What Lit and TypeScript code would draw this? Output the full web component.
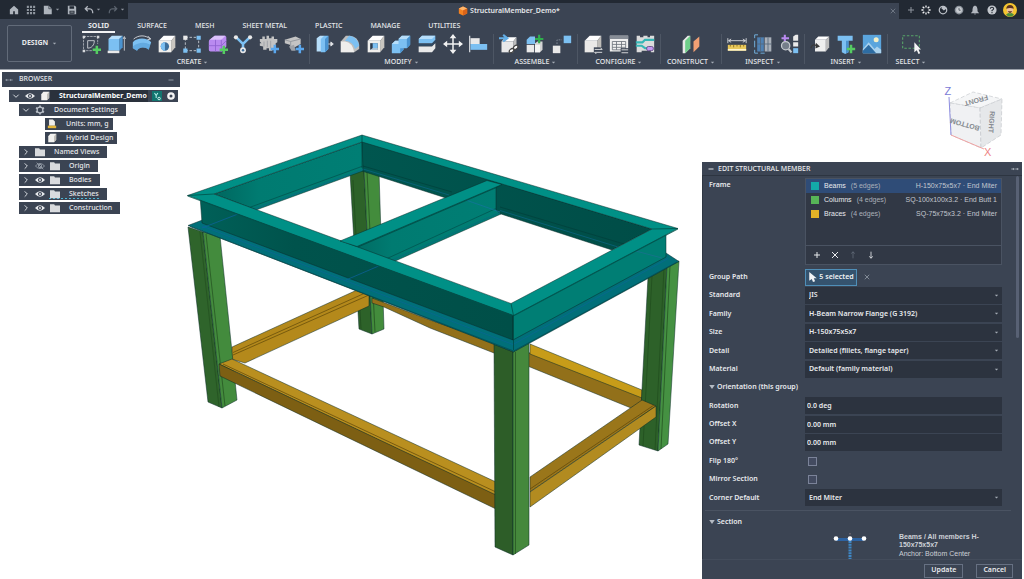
import { LitElement, html, svg, css, nothing } from "lit";
import { customElement } from "lit/decorators.js";
import { classMap } from "lit/directives/class-map.js";

const B = "#7cc0f2";
const BD = "#4a93d0";
const W = "#e9e9e9";
const G = "#bdbdbd";
const GREEN = "#55cc62";

const plus = (x: number, y: number, c: string) =>
  svg`<path d="M${x - 5} ${y}h10M${x} ${y - 5}v10" stroke=${c} stroke-width="3" fill="none"/>`;

const block = (front: string, top: string, side: string) => svg`
  <path d="M2 8L8 2H22L17 8Z" fill=${top}/>
  <path d="M17 8L22 2V16L17 22Z" fill=${side}/>
  <path d="M2 8H17V22H2Z" fill=${front}/>`;

const icons: Record<string, unknown> = {
  sketch: svg`<path d="M3 3H20M3 3V20H14M20 3V12" stroke="#aeb3ba" stroke-dasharray="3 1" fill="none"/>
    <path d="M2 2h3v3H2zM19 2h3v3h-3zM2 19h3v3H2z" fill="#d5d8dc"/>
    <path d="M8 8V17C13 17 16 13 16 8Z" stroke="#d5d8dc" fill="none"/>${plus(19, 19, GREEN)}`,
  extrude: svg`<path d="M3 6L7 2H20L16 6Z" fill="#b7defa"/><path d="M16 6L20 2V16L16 20Z" fill=${BD}/>
    <path d="M3 6H16V20H3Z" fill=${B}/><path d="M2 20H16V23H2Z" fill=${W}/><path d="M22 4V20M20.500 6L22 3L23.500 6" stroke="#d5d8dc" fill="none"/>`,
  revolve: svg`<path d="M1 10C6 4 18 4 23 10L20 19C16 15 9 15 6 20L1 17Z" fill=${B}/>
    <path d="M1 17L6 20C9 15 16 15 20 19L22 13C16 9 7 10 1 15Z" fill=${BD} opacity=".5"/>
    <path d="M2 6C8 1 16 1 22 6M19 2.500L22.500 6L18.500 7" stroke="#e3e5e8" fill="none"/>`,
  hole: svg`${block("#f0efec", "#ffffff", "#c9c6c0")}<circle cx="9.500" cy="15" r="5" fill="#3d6f9c"/><path d="M9.500 10A5 5 0 0 0 9.500 20Z" fill=${B}/>`,
  pattern: svg`<path d="M4 4H20V20H4Z" stroke="#cfd4da" stroke-dasharray="3 2" fill="none"/>
    <path d="M1.500 2h5v5h-5z" fill=${W}/><path d="M17.500 2h5v5h-5zM1.500 17.500h5v5h-5zM17.500 17.500h5v5h-5z" fill=${B}/>`,
  form: svg`<path d="M1 9Q1 7 3 6L8 2H20Q22 2 22 4V15L17 21H3Q1 21 1 19Z" fill="#b98af0"/>
    <path d="M2 7L8 2H21L16 7Z" fill="#dcc2fb"/><path d="M9 7V21M1 14H16M16 7V21M16 14L22 8" stroke="#8f62cf" fill="none"/>${plus(19, 19, GREEN)}`,
  branch: svg`<path d="M4 4L12 12L20 4M12 12V20" stroke=${B} stroke-width="3" fill="none"/>
    <circle cx="3.500" cy="4" r="2.500" fill=${W}/><circle cx="20.500" cy="4" r="2.500" fill=${W}/><circle cx="12" cy="19.500" r="3.500" fill=${W}/><circle cx="12" cy="19.500" r="1.500" fill="#3d6f9c"/>`,
  gear: svg`<path d="M1 9V6H4V3H7V6H9V2H12V5H15V3H18V6H22V10L20 11V17H16V20H12V17H9V19H5V15L1 14V11H3Z" fill="#c4c4c4"/>
    <path d="M6 9V15M10 8V16M14 8V17" stroke="#9a9ea4" fill="none"/>${plus(19, 18, "#5aa7ee")}`,
  derive: svg`<path d="M1 7L14 3L20 6V12L9 18L7 13L1 11Z" fill="#c4c4c4"/><path d="M1 7L8 9L20 6M8 9V14" stroke="#8d9299" fill="none"/>
    <path d="M6 15L12 13L14 20H9Z" fill="#9ea2a8"/>${plus(19, 18, "#5aa7ee")}`,
  presspull: svg`<path d="M2 5L6 2H11V21H2Z" fill="#b7defa"/><path d="M7 6L11 2H16V18L12 22H7Z" fill=${B}/><path d="M12 6L16 2V18L12 22Z" fill=${BD}/>
    <path d="M16 12H21M19 9.500L22 12L19 14.500Z" stroke="#e3e5e8" fill="#e3e5e8"/>`,
  fillet: svg`<path d="M1 9L7 2H12Q22 3 23 13V18L17 22H1Z" fill=${G}/><path d="M1 9H6Q15 10 17 22H1Z" fill="#efeeec"/>
    <path d="M6 8L11 2Q21 3 23 14L18 18Q16 9 6 8Z" fill=${B}/>`,
  shell: svg`${block("#f0efec", "#ffffff", "#c9c6c0")}<path d="M5 11H14V19H5Z" fill="#2d3b4d"/><path d="M8 11H14V17H8Z" fill=${B}/><path d="M5 19L8 17H14V19Z" fill="#d9eefc"/>`,
  combine: svg`<path d="M9 6L13 2H23V13L19 17H15V19L11 23H1V12L5 8H9Z" fill=${B}/>
    <path d="M9 6L13 2H23L19 6ZM1 12L5 8H9V12Z" fill="#b7defa"/><path d="M19 6L23 2V13L19 17ZM11 23V17H15V19Z" fill=${BD}/>`,
  split: svg`<path d="M2 6L6 2H22V7L18 11H2Z" fill=${B}/><path d="M2 12H18L23 7V9L18 14H2Z" fill="#2f4b66"/><path d="M2 15H18L22 11V17L18 22H2Z" fill=${W}/><path d="M2 6L6 2H22L18 6Z" fill="#b7defa"/>`,
  move: svg`<path d="M12 3V21M3 12H21" stroke="#f2f2f2" stroke-width="1.800" fill="none"/><path d="M12 0L16 5H8ZM12 24L16 19H8ZM0 12L5 8V16ZM24 12L19 8V16Z" fill="#f2f2f2"/>`,
  align: svg`<path d="M2 2V22" stroke="#d5d8dc" stroke-width="1.500"/><path d="M3 5H14V12H3Z" fill=${W}/><path d="M3 12H23V19H3Z" fill=${B}/>`,
  insertcomp: svg`<path d="M3 9L8 4H21L17 9Z" fill="#fff"/><path d="M3 9H17V22H3Z" fill=${W}/><path d="M17 9L21 4V15L17 20Z" fill=${G}/>
    <path d="M0 5H9M5 1L10 5L5 9" stroke="#63aee6" stroke-width="2.500" fill="none"/>
    <ellipse cx="15" cy="20" rx="3" ry="2" stroke="#454545" stroke-width="1.500" fill="#fff" transform="rotate(-40 15 20)"/><ellipse cx="20" cy="16" rx="3" ry="2" stroke="#454545" stroke-width="1.500" fill="#fff" transform="rotate(-40 20 16)"/>`,
  newcomp: svg`<path d="M2 7L6 3H12V12H2Z" fill=${B}/><path d="M2 13H11V22H2Z" fill=${W}/><path d="M12 11L15 9H21V19L18 22H12Z" fill="#d4d4d4"/><path d="M12 13H18V22H12Z" fill="#f4f4f4"/>
    <path d="M12 6H22M17 1V11" stroke="#2fae4c" stroke-width="2.600"/>`,
  joint: svg`<path d="M14 2h9v9h-9z" fill=${B}/><path d="M1 14h9v9H1z" fill=${W}/><path d="M6 12V7H12" stroke="#8a93a0" stroke-dasharray="2 1.500" fill="none"/>`,
  config: svg`${block("#eae9e7", "#ffffff", "#bfbdb9")}<path d="M13 16H24V24H13Z" fill="#3b4453"/><path d="M14 18.500H23M21 16.500L23 18.500M23 22H14M16 24L14 22" stroke="#f0f0f0" fill="none"/>`,
  configtable: svg`<path d="M1 2H23V21H1Z" fill="#f0f0f0"/><path d="M1 2H23V6H1Z" fill="#878d96"/><path d="M4 9H20V19H4ZM4 12.500H20M4 16H20M9 9V19M15 9V19" stroke="#6c727b" fill="none"/>
    <path d="M14 17H24V24H14Z" fill="#3b4453"/><path d="M15 19H23M23 22.500H15" stroke="#f0f0f0"/>`,
  configflow: svg`<path d="M2 2H6V4H10V2H15V4H18V2H23V22H19V20H8V22H2Z" fill="#dcdcdc"/><path d="M1 10H9L12 7H23M1 14H8L12 17H15" stroke="#35b6b6" stroke-width="2.500" fill="none"/><rect x="14" y="15" width="8" height="5" rx="2" fill="#c59af2" stroke="#5c4580"/>`,
  plane: svg`<path d="M2 8L8 2H11V17L5 23H2Z" fill=${W}/><path d="M5 8L11 2V17L5 23Z" fill="#6fcf8a"/><path d="M15 9L22 3V15L15 22Z" fill="#f2a074"/>`,
  measure: svg`<path d="M1 5V11M23 5V11M2 8H22M5 6L2 8L5 10M19 6L22 8L19 10" stroke="#e3e5e8" fill="none"/><path d="M1 13H23V20H1Z" fill="#e9c95c"/><path d="M4 13V15M8 13V16M12 13V15M16 13V16M20 13V15" stroke="#84691b"/><path d="M1 18H23V20H1Z" fill="#fff6cf"/>`,
  section: svg`<path d="M6 1H2V5M2 8V16M2 19V23H6M9 23H14" stroke=${B} fill="none"/><path d="M5 4H13V21H5Z" fill="#4f81b3"/><path d="M14 4H22V21H14Z" fill="#aab1ba"/><path d="M5 12H22M9 4V21M18 4V21" stroke="#56677c" fill="none"/>`,
  analyze: svg`<path d="M17 3L20 1H23V8H17ZM17 10H23V15H17Z" fill=${W}/><path d="M17 17H23V23H17Z" fill=${B}/><path d="M7 1V9M3 5H12" stroke="#b98af0" stroke-width="2.500"/><circle cx="8" cy="14" r="5" fill="#757e8a" stroke="#c7cbd0" stroke-width="1.500"/><path d="M11.500 18L15 22" stroke="#c7cbd0" stroke-width="2.500"/>`,
  insertpart: svg`<path d="M6 7L10 3H23L19 7Z" fill="#fff"/><path d="M6 7H19V21H6Z" fill="#efefef"/><path d="M19 7L23 3V16L19 21Z" fill=${G}/><path d="M1 17C2 13 5 12 8 14" stroke="#3a3a3a" stroke-width="1.500" fill="none"/><path d="M7 10.500L12 15L6.500 17.500Z" fill="#3a3a3a"/>`,
  fastener: svg`<path d="M2 2H20V8H15V22L11 24L7 22V8H2Z" fill=${B}/><path d="M15 8V22L12 23V8Z" fill=${BD}/>${plus(18, 18, GREEN)}`,
  image: svg`<path d="M1 1H23V23H1Z" fill="#5aa5dd"/><circle cx="17" cy="7" r="3" fill="#f4f0c8"/><path d="M1 18L8 10L15 18L18 15L23 19V23H1Z" fill="#a9d2ee"/><path d="M1 20L8 13L17 23H1Z" fill="#2e6da3"/>`,
  select: svg`<path d="M2 2H22V17H2Z" stroke="#57a368" stroke-width="1.300" stroke-dasharray="3 2" fill="none"/><path d="M16 10V22L19 19.500L21 24L23 23L21 18.500H24Z" fill="#f5f5f5"/>`,
  home: svg`<path d="M2 11L12 2L22 11V22H14V15H10V22H2Z" fill="#aeb4bc"/>`,
  grid: svg`<path d="M2 2h5v5H2zM9.500 2h5v5h-5zM17 2h5v5h-5zM2 9.500h5v5H2zM9.500 9.500h5v5h-5zM17 9.500h5v5h-5zM2 17h5v5H2zM9.500 17h5v5h-5zM17 17h5v5h-5z" fill="#8f969f"/>`,
  file: svg`<path d="M2 2H14L21 9V22H2Z" fill="#aeb4bc"/><path d="M14 2V9H21" stroke="#222933" stroke-width="1.500" fill="none"/>`,
  save: svg`<path d="M2 2H19L22 5V22H2Z" fill="#aeb4bc"/><path d="M6 3H17V9H6ZM6 14H18V21H6Z" fill="#222933"/><path d="M8 17H16" stroke="#aeb4bc" stroke-width="2"/>`,
  undo: svg`<path d="M9 3L3 9L9 15M4 9H14Q21 10 21 20" stroke="#b2b7bf" stroke-width="3" fill="none"/>`,
  redo: svg`<path d="M15 3L21 9L15 15M20 9H10Q3 10 3 20" stroke="#5b636e" stroke-width="3" fill="none"/>`,
  caret: svg`<path d="M4 8H20L12 17Z" fill="currentColor"/>`,
  fold: svg`<path d="M1 4H23L12 20Z" fill="currentColor"/>`,
  close: svg`<path d="M3 3L21 21M21 3L3 21" stroke="currentColor" stroke-width="3" fill="none"/>`,
  add: svg`<path d="M12 3V21M3 12H21" stroke="currentColor" stroke-width="3" fill="none"/>`,
  up: svg`<path d="M12 22V3M7 8L12 2L17 8" stroke="currentColor" stroke-width="2" fill="none"/>`,
  down: svg`<path d="M12 2V21M7 16L12 22L17 16" stroke="currentColor" stroke-width="2.500" fill="none"/>`,
  dash: svg`<path d="M2 12H22" stroke="currentColor" stroke-width="4"/>`,
  back: svg`<path d="M2 12H11M14 12H23" stroke="currentColor" stroke-width="3"/><path d="M1 12L6 8V16ZM13 12L18 8V16Z" fill="currentColor"/>`,
  fwd: svg`<path d="M1 12H10M13 12H22" stroke="currentColor" stroke-width="3"/><path d="M11 12L6 8V16ZM23 12L18 8V16Z" fill="currentColor"/>`,
  spark: svg`<path d="M12 1V6M12 18V23M1 12H6M18 12H23M4 4L8 8M16 16L20 20M20 4L16 8M8 16L4 20" stroke="#f0f1f3" stroke-width="3.200" fill="none"/>`,
  ext: svg`<circle cx="12" cy="12" r="9" stroke="#bcc1c8" stroke-width="3" fill="none"/><path d="M12 2L22 8L14 13L8 8Z" fill="#bcc1c8"/>`,
  clock: svg`<circle cx="12" cy="12" r="10.500" fill="#8f969f"/><circle cx="12" cy="12" r="7" fill="#c9cdd2"/><path d="M12 7V12.500H16" stroke="#4b525d" stroke-width="2" fill="none"/>`,
  bell: svg`<path d="M12 1Q18 3 18 10V15L22 20H2L6 15V10Q6 3 12 1ZM9 21H15Q12 25 9 21Z" fill="#b2b7bf"/>`,
  help: svg`<circle cx="12" cy="12" r="11" fill="#c3c7cd"/><path d="M8 9Q8 5.500 12 5.500T16 9Q16 11 12 13V15M12 17V19.500" stroke="#222933" stroke-width="2.500" fill="none"/>`,
  avatar: svg`<circle cx="12" cy="12" r="12" fill="#f4c430"/><path d="M5 20Q12 13 19 20Q12 27 5 20Z" fill="#4b8f3a"/><circle cx="12" cy="12" r="5.500" fill="#efc19a"/><path d="M5.500 10Q6 3.500 12 3.500T18.500 10Q12 7 5.500 10Z" fill="#5b3420"/><path d="M8 14Q12 20 16 14Z" fill="#5b3420"/>`,
  cube: svg`<path d="M12 1L22 6V18L12 23L2 18V6Z" fill="#f58220"/><path d="M12 1L22 6L12 11L2 6Z" fill="#ffb56b"/><path d="M12 11L22 6V18L12 23Z" fill="#d9641a"/>`,
  body: svg`<path d="M3 8L8 2H22V16L17 22H3Z" fill="#f2f1ee"/><path d="M17 8L22 2V16L17 22Z" fill="#bdbbb6"/>`,
  eye: svg`<path d="M0 12Q12 -1 24 12Q12 25 0 12Z" fill="#e8eaed"/><circle cx="12" cy="12" r="5" fill="#3b4453"/><circle cx="12" cy="12" r="2.200" fill="#e8eaed"/>`,
  hidden: svg`<path d="M1 12Q12 0 23 12Q12 24 1 12ZM4 4L20 20" stroke="#9aa2ad" stroke-width="2" fill="none"/><circle cx="12" cy="12" r="4" stroke="#9aa2ad" stroke-width="2" fill="none"/>`,
  folder: svg`<path d="M0 3H10L12 6H24V22H0Z" fill="#d9dbde"/>`,
  cog: svg`<circle cx="12" cy="12" r="7" stroke="#b9bfc8" stroke-width="3" fill="none"/><path d="M12 1V5M12 19V23M2.500 6.500L6 8.500M18 15.500L21.500 17.500M21.500 6.500L18 8.500M6 15.500L2.500 17.500" stroke="#b9bfc8" stroke-width="4"/>`,
  units: svg`<path d="M5 1H14L19 6V16H5Z" fill="#efeeec"/><path d="M2 16H22V22H2Z" fill="#e3b53a"/>`,
  open: svg`<path d="M4 8L12 16L20 8" stroke="#d5d9de" stroke-width="3" fill="none"/>`,
  shut: svg`<path d="M8 4L16 12L8 20" stroke="#d5d9de" stroke-width="3" fill="none"/>`,
  version: svg`<path d="M0 0H24V24H0Z" fill="#12756f"/><path d="M6 5L10 11L14 5M10 11V17" stroke="#b6efe9" stroke-width="2.500" fill="none"/><circle cx="17" cy="18" r="3" stroke="#e8fffd" stroke-width="2" fill="none"/>`,
  radio: svg`<circle cx="12" cy="12" r="8" stroke="#f5f5f5" stroke-width="7" fill="none"/>`,
  cursor: svg`<path d="M3 0V21L9 17L12 24L17 22L14 15H21Z" fill="#f2f4f6"/>`,
};

const icon = (name: string, size: string) =>
  html`<svg class=${"i " + size} viewBox="0 0 24 24" aria-hidden="true">${icons[name]}</svg>`;

const shared = css`
  *, *::before, *::after { box-sizing: border-box; }
  button, input, select { font: inherit; color: inherit; margin: 0; padding: 0; border: 0; background: none; border-radius: 0; }
  button { display: inline-flex; align-items: center; justify-content: center; white-space: nowrap; }
  .i { display: block; flex: none; }
  .i.xs { width: 5px; height: 5px; }
  .i.s { width: 6px; height: 6px; }
  .i.sm { width: 8px; height: 8px; }
  .i.md { width: 10px; height: 10px; }
  .i.lg { width: 14px; height: 14px; }
  .i.xl { width: 20px; height: 20px; }
`;

const GROUPS: [string, string[]][] = [
  ["CREATE", ["sketch", "extrude", "revolve", "hole", "pattern", "form", "branch", "gear", "derive"]],
  ["MODIFY", ["presspull", "fillet", "shell", "combine", "split", "move", "align"]],
  ["ASSEMBLE", ["insertcomp", "newcomp", "joint"]],
  ["CONFIGURE", ["config", "configtable", "configflow"]],
  ["CONSTRUCT", ["plane"]],
  ["INSPECT", ["measure", "section", "analyze"]],
  ["INSERT", ["insertpart", "fastener", "image"]],
  ["SELECT", ["select"]],
];

@customElement("app-header")
export class AppHeader extends LitElement {
  static styles = [shared, css`
    :host { display: block; background: #3b4453; color: #e6e8eb; border-bottom: 1px solid #9ba1aa; }
    .title { display: grid; grid-template-columns: 128px 1fr 125px; height: 19px; background: #222933; }
    .quick { display: flex; align-items: center; gap: 7px; padding-left: 9px; color: #8f969f; }
    .quick button { gap: 2px; }
    .doc { display: flex; align-items: center; margin-top: 3px; background: #3b4453; font-size: 7px; font-weight: 600; }
    .name { flex: 1; display: flex; align-items: center; justify-content: center; gap: 2px; padding-left: 3px; }
    .doc button { width: 12px; color: #7d8591; }
    .account { display: flex; align-items: center; justify-content: space-around; padding: 0 4px 0 5px; color: #8f969f; }
    .bar { display: flex; height: 50px; }
    .design { width: 65px; margin: 6px 4px 7px 7px; border: 1px solid #626b79; border-radius: 2px; font-size: 7px; font-weight: 700; gap: 4px; }
    .main { flex: 1; min-width: 0; }
    .tabs { display: flex; gap: 16px; padding-left: 6px; height: 14px; }
    .tabs button { padding: 2px 6px 0; font-size: 7px; font-weight: 500; border-bottom: 2px solid transparent; }
    .tabs .on { font-weight: 700; border-color: #f1f2f4; }
    .ribbon { display: grid; grid-template-columns: 234fr 184fr 84fr 83fr 61fr 83fr 83fr 47fr 89fr; }
    .group { padding: 0 2px; border-right: 1px solid #4d5664; height: 30px; margin-top: 1px; }
    .group:last-of-type { border-color: transparent; }
    .tools { display: flex; justify-content: space-around; height: 20px; }
    .label { display: flex; width: 100%; height: 12px; gap: 2px; font-size: 7px; font-weight: 500; margin-top: 2px; }
    .label .i, .design .i { color: #a4abb5; }
  `];

  render() {
    return html`
      <div class="title">
        <nav class="quick">
          <button aria-label="Home">${icon("home", "md")}</button>
          <button aria-label="Data panel">${icon("grid", "md")}</button>
          <button aria-label="File">${icon("file", "md")}${icon("caret", "xs")}</button>
          <button aria-label="Save">${icon("save", "md")}</button>
          <button aria-label="Undo">${icon("undo", "md")}${icon("caret", "xs")}</button>
          <button aria-label="Redo">${icon("redo", "md")}${icon("caret", "xs")}</button>
        </nav>
        <div class="doc">
          <span class="name">${icon("cube", "md")}<span>StructuralMember_Demo*</span></span>
          <button aria-label="Close tab">${icon("close", "s")}</button>
        </div>
        <div class="account">
          <button aria-label="New tab">${icon("add", "sm")}</button>
          <button aria-label="Assistant">${icon("spark", "md")}</button>
          <button aria-label="Extensions">${icon("ext", "md")}</button>
          <button aria-label="Job status">${icon("clock", "md")}</button>
          <button aria-label="Notifications">${icon("bell", "md")}</button>
          <button aria-label="Help">${icon("help", "md")}</button>
          <button aria-label="Account">${icon("avatar", "lg")}</button>
        </div>
      </div>
      <div class="bar">
        <button class="design">DESIGN ${icon("caret", "xs")}</button>
        <div class="main">
          <nav class="tabs">
            ${["SOLID", "SURFACE", "MESH", "SHEET METAL", "PLASTIC", "MANAGE", "UTILITIES"].map(
              (t, n) => html`<button class=${classMap({ on: n === 0 })}>${t}</button>`)}
          </nav>
          <div class="ribbon">
            ${GROUPS.map(([label, tools]) => html`
              <section class="group">
                <div class="tools">${tools.map((t) => html`<button aria-label=${t}>${icon(t, "xl")}</button>`)}</div>
                <button class="label">${label} ${icon("caret", "xs")}</button>
              </section>`)}
          </div>
        </div>
      </div>`;
  }
}

type Node = { cls: string; text: string; icons: string[] };
const NODES: Node[] = [
  { cls: "root", text: "StructuralMember_Demo", icons: ["open", "eye", "body"] },
  { cls: "one", text: "Document Settings", icons: ["open", "cog"] },
  { cls: "two", text: "Units: mm, g", icons: ["units"] },
  { cls: "two", text: "Hybrid Design", icons: ["body"] },
  { cls: "one", text: "Named Views", icons: ["shut", "folder"] },
  { cls: "one", text: "Origin", icons: ["shut", "hidden", "folder"] },
  { cls: "one", text: "Bodies", icons: ["shut", "eye", "folder"] },
  { cls: "one sketches", text: "Sketches", icons: ["shut", "eye", "folder"] },
  { cls: "one", text: "Construction", icons: ["shut", "eye", "folder"] },
];

@customElement("browser-palette")
export class BrowserPalette extends LitElement {
  static styles = [shared, css`
    :host { display: block; width: 178px; color: #e6e8eb; font-size: 7px; font-weight: 500; }
    .head { display: flex; align-items: center; height: 15px; padding: 0 6px 0 3px; gap: 6px; background: #3b4453; color: #8e96a2; }
    .head .t { flex: 1; color: #e6e8eb; }
    .tree { list-style: none; margin: 3px 0 0; padding: 0; display: flex; flex-direction: column; align-items: flex-start; gap: 2px; }
    .node { display: flex; align-items: center; gap: 5px; height: 12px; padding: 0 8px 0 3px; margin-left: 17px; background: #3b4453; white-space: nowrap; }
    .text { margin-left: 4px; }
    .root { margin-left: 7px; padding-right: 3px; font-weight: 700; color: #fff; background: linear-gradient(90deg, #3b4453 0 41px, #2a313c 41px 139px, #3b4453 139px); }
    .two { margin-left: 43px; padding: 0 4px 0 2px; }
    .sketches { background: repeating-linear-gradient(90deg, #4bb7d6 0 2px, #3b4453 2px 4px) 30px 10px / calc(100% - 36px) 1px no-repeat, #3b4453; }
  `];

  render() {
    return html`
      <header class="head">${icon("back", "sm")}<span class="t">BROWSER</span>${icon("dash", "s")}</header>
      <ul class="tree">
        ${NODES.map((n) => html`
          <li class=${"node " + n.cls}>
            ${n.icons.map((i) => icon(i, i === "open" || i === "shut" ? "sm" : "md"))}
            <span class="text">${n.text}</span>
            ${n.cls === "root" ? html`${icon("version", "md")}${icon("radio", "sm")}` : nothing}
          </li>`)}
      </ul>`;
  }
}

@customElement("model-view")
export class ModelView extends LitElement {
  static styles = css`
    :host { display: block; }
    .scene { display: block; width: 100%; }
    .edge { stroke: #0a2a28; stroke-width: 0.5; stroke-linejoin: round; }
    .line { fill: none; stroke-width: 0.7; }
    .face { font: 700 7px "Liberation Sans", sans-serif; fill: #858a90; }
    .axis { font: 400 11px "Liberation Sans", sans-serif; }
  `;

  render() {
    const p = (pts: string, fill: string) => svg`<polygon class="edge" points=${pts} fill=${fill}/>`;
    const l = (d: string, c: string, w = 0.7) => svg`<path class="line" d=${d} stroke=${c} stroke-width=${w}/>`;
    return html`
      <svg class="scene" viewBox="0 70 1024 509" role="img" aria-label="Structural frame model">
        <defs>
          <linearGradient id="dark"><stop offset="0" stop-color="#006058"/><stop offset=".3" stop-color="#00534c"/><stop offset="1" stop-color="#004f48"/></linearGradient>
          <linearGradient id="mid"><stop offset="0" stop-color="#00675f"/><stop offset=".3" stop-color="#007b71"/><stop offset="1" stop-color="#007e74"/></linearGradient>
          <linearGradient id="back"><stop offset="0" stop-color="#00564f"/><stop offset="1" stop-color="#004d47"/></linearGradient>
        </defs>
        ${p("350,172 364,170 372,334 359,329", "#2d6229")}
        ${p("364,170 379,172 384,329 372,334", "#438c3c")}
        ${l("M367 172L375 332M353 180L361 329", "#1f4a1e")}
        ${p("372,298 430,320 494,342 530,353 642,397 642,401 631,408 530,367 494,353 430,328 384,307 372,303", "#92701a")}
        ${p("530,344 642,390 642,398 530,354", "#c79c19")}
        ${p("232,347 357,290 369,294 369,306 245,363 231,359", "#b4891b")}
        ${l("M233 355L369 295M233 352.500L364 293.500", "#5e4709")}
        ${p("188,227 203,232 222,408 208,402", "#2f642b")}
        ${p("203,232 220,236 237,400 222,408", "#438b3d")}
        ${l("M200 232L219 407M206 234L225 406", "#234f20")}
        ${p("219,364 232,359 496,482 496,496", "#b98f1f")}
        ${p("219,364 496,495 496,509 220,376", "#7d5f13")}
        ${l("M223 364L496 492", "#5b4409")}
        ${p("648,277 667,266 658,451 639,445", "#2d6129")}
        ${p("667,266 679,261 668,444 658,451", "#459142")}
        ${l("M664 268L655 450M652 276L643 446M670 266L661 449", "#204c1d")}
        ${p("530,477 642,400 656,406 530,492", "#9a761a")}
        ${p("530,492 656,406 656,417 530,507", "#b28b20")}
        ${l("M530 489L654 405", "#5b4409")}
        ${p("494,344 513,352 513,555 495,547", "#2d5d28")}
        ${p("513,352 529,342 529,545 513,555", "#45883c")}
        ${l("M515.500 352V554", "#234f20")}

        ${p("362,141 652,229 612,250 501,214 446,198 362,171", "url(#back)")}
        ${l("M363 166L452 192M500 207L624 244", "#003f3b")}
        ${l("M363 169L449 195M500 210.500L618 247", "#0b6685", 2.2)}
        ${p("214,194 362,142 363,171 256,210", "url(#mid)")}
        ${l("M248 208L363 166", "#00504c")}
        ${l("M254 209L363 169.500", "#0c6688", 2)}
        ${p("345,245 496,184 496,210 501,214 393,262", "url(#mid)")}
        ${l("M386 259L496 208.500", "#00504c")}
        ${l("M391 260.500L500 212.500", "#07687e", 2.2)}
        ${l("M463 199L500 212", "#1572a0")}

        ${p("188,225.500 205,219 513,339 666,253 679,261.500 513.500,352", "#016f79")}
        ${p("200,196 513,312 513,340 202,223", "url(#dark)")}
        ${p("513,312 666,231 666,257 513,340", "#007e74")}
        ${l("M202 226L513 344.500L668 258.500", "#0a6593", 1.6)}
        ${l("M190 226.500L513.500 351L677 262", "#044a4e", 1.3)}
        ${l("M202 228L238 214M346 280L388 262", "#0f62a0", 1)}
        ${l("M632 250L662 258", "#1d6f92")}

        <path class="edge" fill="#009086" fill-rule="evenodd" d="M187.500 195.500L362 135L678 228.500L513.500 315.500ZM214 194L511 303.500L652 229L362 142Z"/>
        ${p("340,241 487,180.500 502,184.500 357,246.500", "#009086")}
        ${l("M187.500 196L513.500 316L678 229", "#00564f", 1.6)}
        ${l("M187.500 195.500L214 194M362 135V168M678 228.500L652 229M511 303.500L513.500 315.500V350M358 247L500 186", "#00463f")}

        <polygon points="950,103 973,92 1002,99 980,108" fill="#f5f6f7" stroke="#c9ccd0" stroke-width=".7" stroke-dasharray="4 2"/>
        <polygon points="950,103 980,108 981,148 951,135" fill="#f0f1f3" stroke="#c9ccd0" stroke-width=".7" stroke-dasharray="4 2"/>
        <polygon points="980,108 1002,99 1001,135 981,148" fill="#e6e8ea" stroke="#c4c7cc" stroke-width=".7" stroke-dasharray="4 2"/>
        <path d="M949 97L951 135" stroke="#8d8de0"/><path d="M951 135L984 149" stroke="#f0a3a3"/>
        <text class="face" transform="translate(965 124) rotate(195)" text-anchor="middle" dominant-baseline="middle">BOTTOM</text>
        <text class="face" transform="translate(991 122) rotate(94)" text-anchor="middle" dominant-baseline="middle">RIGHT</text>
        <text class="face" transform="translate(976 100) rotate(165)" text-anchor="middle" dominant-baseline="middle">FRONT</text>
        <text class="axis" x="944.500" y="95" fill="#7a7ad6">Z</text>
        <text class="axis" x="984" y="156" fill="#ee8585">X</text>
      </svg>`;
  }
}

const MEMBERS = [
  { name: "Beams", edges: "(5 edges)", spec: "H-150x75x5x7 · End Miter", cls: "beams" },
  { name: "Columns", edges: "(4 edges)", spec: "SQ-100x100x3.2 · End Butt 1", cls: "columns" },
  { name: "Braces", edges: "(4 edges)", spec: "SQ-75x75x3.2 · End Miter", cls: "braces" },
];

@customElement("member-dialog")
export class MemberDialog extends LitElement {
  static styles = [shared, css`
    :host { display: flex; flex-direction: column; width: 320px; background: #3b4453; color: #e8eaed; font-size: 7px; font-weight: 600; }
    .head { display: flex; align-items: center; gap: 4px; height: 14px; padding: 1px 3px 0 6px; border-bottom: 1px solid #2d3541; font-weight: 500; }
    .head .t { flex: 1; }
    .head .sm { color: #a4abb5; }
    .body { position: relative; flex: 1; min-height: 0; display: flex; flex-direction: column; padding: 2px 20px 0 6px; border-left: 1px solid #2f3743; }
    .thumb { position: absolute; right: 3px; top: 0; width: 3px; height: 162px; border-radius: 2px; background: #586174; }
    .row { display: grid; grid-template-columns: 96px 1fr; align-items: center; }
    .frame { align-items: start; line-height: 14px; }
    .list { display: flex; flex-direction: column; height: 87px; background: #313845; border: 1px solid #4a5362; font-family: "Liberation Sans", Arial, sans-serif; font-weight: 400; }
    .items { flex: 1; list-style: none; margin: 0; padding: 0; }
    .item { display: flex; width: 100%; height: 14px; justify-content: flex-start; gap: 5px; padding: 0 4px 0 5px; }
    .item .spec { margin-left: auto; color: #c2c7cf; }
    .item .edges { color: #a9b0ba; }
    .item.on { background: #2f4c77; }
    .chip { width: 8px; height: 8px; }
    .beams { background: #13a9a9; } .columns { background: #57b557; } .braces { background: #e2b227; }
    .actions { display: flex; gap: 10px; height: 19px; padding-left: 7px; border-top: 1px solid #4a5362; }
    .off { color: #6c7583; }
    .form { flex: 1; display: grid; grid-auto-rows: 1fr; padding-top: 3px; }
    .field { width: 100%; height: 17px; background: #2c333f; padding-left: 2px; }
    .pick { position: relative; display: block; }
    .pick select { appearance: none; display: block; width: 100%; height: 17px; background: #2c333f; padding-left: 4px; }
    .pick .i { position: absolute; right: 3px; top: 6px; color: #a4abb5; pointer-events: none; }
    .path { display: flex; align-items: center; gap: 7px; color: #9aa1ac; }
    .sel { height: 17px; width: 52px; gap: 1px; border: 1px solid #4f8fb8; background: #35536e; color: #f1f3f5; }
    .check { appearance: none; width: 9px; height: 9px; margin-left: 3px; border: 1px solid #7b8399; background: #434b60; display: block; }
    .fold { justify-content: flex-start; gap: 2px; font-weight: 600; }
    .fold .i { color: #b5bbc4; }
    .section { border-top: 1px solid #4a5362; margin: 3px -9px 0 -4px; padding-left: 4px; height: 49px; overflow: hidden; }
    .section .fold { height: 22px; }
    .preview { display: grid; grid-template-columns: 94px 90px 88px; gap: 0 2px; align-items: start; font: 400 7px/8px "Liberation Sans", Arial, sans-serif; color: #cdd1d7; }
    .diagram { grid-column: 2; width: 90px; height: 27px; }
    .preview p { margin: 0 0 0 2px; }
    .preview b { display: block; margin-bottom: 1px; }
    .foot { display: flex; justify-content: flex-end; align-items: center; gap: 13px; height: 20px; padding: 2px 9px 0 0; border-top: 1px solid #434c5b; }
    .foot button { height: 14px; padding: 0 6px; border: 1px solid #667082; }
  `];

  private pick(id: string, label: string, value: string) {
    return html`<div class="row"><label for=${id}>${label}</label>
      <span class="pick"><select id=${id}><option>${value}</option></select>${icon("caret", "xs")}</span></div>`;
  }

  private text(id: string, label: string, value: string) {
    return html`<div class="row"><label for=${id}>${label}</label><input class="field" id=${id} .value=${value}></div>`;
  }

  private check(id: string, label: string) {
    return html`<div class="row"><label for=${id}>${label}</label><input class="check" id=${id} type="checkbox"></div>`;
  }

  render() {
    return html`
      <header class="head">${icon("dash", "s")}<span class="t">EDIT STRUCTURAL MEMBER</span>${icon("fwd", "sm")}</header>
      <div class="body">
        <div class="thumb"></div>
        <div class="row frame">
          <span>Frame</span>
          <div class="list">
            <ul class="items">
              ${MEMBERS.map((m, n) => html`<li><button class=${classMap({ item: true, on: n === 0 })}>
                <span class=${"chip " + m.cls}></span><span>${m.name}</span><span class="edges">${m.edges}</span><span class="spec">${m.spec}</span>
              </button></li>`)}
            </ul>
            <div class="actions">
              <button aria-label="Add">${icon("add", "sm")}</button>
              <button aria-label="Remove">${icon("close", "sm")}</button>
              <button aria-label="Move up" class="off">${icon("up", "sm")}</button>
              <button aria-label="Move down">${icon("down", "sm")}</button>
            </div>
          </div>
        </div>
        <div class="form">
          <div class="row"><span>Group Path</span>
            <span class="path"><button class="sel">${icon("cursor", "md")}5 selected</button><button aria-label="Clear">${icon("close", "s")}</button></span></div>
          ${this.pick("standard", "Standard", "JIS")}
          ${this.pick("family", "Family", "H-Beam Narrow Flange (G 3192)")}
          ${this.pick("size", "Size", "H-150x75x5x7")}
          ${this.pick("detail", "Detail", "Detailed (fillets, flange taper)")}
          ${this.pick("material", "Material", "Default (family material)")}
          <button class="fold">${icon("fold", "s")}Orientation (this group)</button>
          ${this.text("rotation", "Rotation", "0.0 deg")}
          ${this.text("offx", "Offset X", "0.00 mm")}
          ${this.text("offy", "Offset Y", "0.00 mm")}
          ${this.check("flip", "Flip 180°")}
          ${this.check("mirror", "Mirror Section")}
          ${this.pick("corner", "Corner Default", "End Miter")}
        </div>
        <div class="section">
          <button class="fold">${icon("fold", "s")}Section</button>
          <div class="preview">
            <svg class="diagram" viewBox="0 0 90 27" aria-hidden="true">
              <path d="M31 5H59V8H31Z" fill="#2d62a0"/><path d="M45 0V5" stroke="#8a7a80" stroke-dasharray="1.500 1.500"/>
              <path d="M45 8V27" stroke="#3f86c4" stroke-width="3" stroke-dasharray="2 .8"/>
              <circle cx="31" cy="5.500" r="2.300" fill="#fff"/><circle cx="45" cy="5.500" r="2.300" fill="#fff"/><circle cx="59" cy="5.500" r="2.300" fill="#fff"/>
            </svg>
            <p><b>Beams / All members H-150x75x5x7</b>Anchor: Bottom Center</p>
          </div>
        </div>
      </div>
      <footer class="foot"><button>Update</button><button>Cancel</button></footer>`;
  }
}

@customElement("app-root")
export class AppRoot extends LitElement {
  static styles = css`
    :host { display: flex; flex-direction: column; height: 100vh; overflow: hidden; background: #fff; font-family: "Noto Sans", sans-serif; line-height: 1.2; }
    .stage { position: relative; flex: 1; min-height: 0; overflow: hidden; }
    .browser { position: absolute; left: 2px; top: 2px; }
    .dialog { position: absolute; right: 2px; top: 92px; bottom: 0; }
  `;

  render() {
    return html`
      <app-header></app-header>
      <main class="stage">
        <model-view></model-view>
        <browser-palette class="browser"></browser-palette>
        <member-dialog class="dialog"></member-dialog>
      </main>`;
  }
}
